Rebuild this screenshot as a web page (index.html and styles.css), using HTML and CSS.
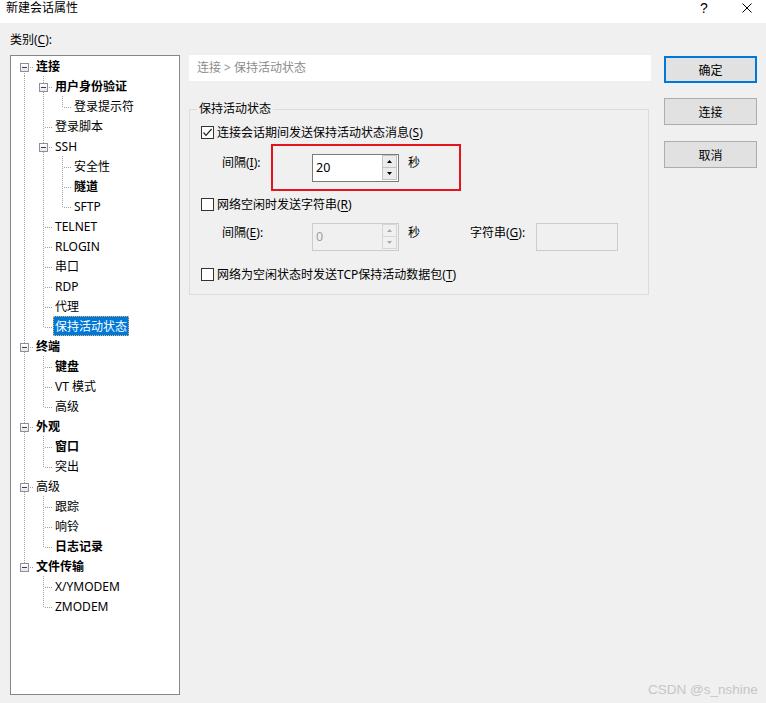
FILE: index.html
```html
<!DOCTYPE html>
<html lang="zh">
<head>
<meta charset="utf-8">
<title>新建会话属性</title>
<link rel="stylesheet" href="styles.css">
</head>
<body>
<div class="window">
  <div class="titlebar">
    <span class="title">新建会话属性</span>
    <span class="tb-spacer"></span>
    <span class="help">?</span>
    <span class="close"><svg width="10" height="10" viewBox="0 0 10 10"><path d="M0.5 0.5L9.5 9.5M9.5 0.5L0.5 9.5" stroke="#000" stroke-width="1" fill="none"/></svg></span>
  </div>

  <div class="main">
    <div class="left">
      <div class="cat">类别(<u>C</u>):</div>
      <div class="tree">
        <div class="row"><span class="c f"><span class="box"><span class="minus"></span></span></span><span class="lbl b">连接</span></div>
        <div class="row"><span class="c v"></span><span class="c t"><span class="box"><span class="minus"></span></span></span><span class="lbl b">用户身份验证</span></div>
        <div class="row"><span class="c v"></span><span class="c v"></span><span class="c l"></span><span class="lbl">登录提示符</span></div>
        <div class="row"><span class="c v"></span><span class="c t"></span><span class="lbl">登录脚本</span></div>
        <div class="row"><span class="c v"></span><span class="c t"><span class="box"><span class="minus"></span></span></span><span class="lbl">SSH</span></div>
        <div class="row"><span class="c v"></span><span class="c v"></span><span class="c t"></span><span class="lbl">安全性</span></div>
        <div class="row"><span class="c v"></span><span class="c v"></span><span class="c t"></span><span class="lbl b">隧道</span></div>
        <div class="row"><span class="c v"></span><span class="c v"></span><span class="c l"></span><span class="lbl">SFTP</span></div>
        <div class="row"><span class="c v"></span><span class="c t"></span><span class="lbl">TELNET</span></div>
        <div class="row"><span class="c v"></span><span class="c t"></span><span class="lbl">RLOGIN</span></div>
        <div class="row"><span class="c v"></span><span class="c t"></span><span class="lbl">串口</span></div>
        <div class="row"><span class="c v"></span><span class="c t"></span><span class="lbl">RDP</span></div>
        <div class="row"><span class="c v"></span><span class="c t"></span><span class="lbl">代理</span></div>
        <div class="row"><span class="c v"></span><span class="c l"></span><span class="lbl sel">保持活动状态</span></div>
        <div class="row"><span class="c t"><span class="box"><span class="minus"></span></span></span><span class="lbl b">终端</span></div>
        <div class="row"><span class="c v"></span><span class="c t"></span><span class="lbl b">键盘</span></div>
        <div class="row"><span class="c v"></span><span class="c t"></span><span class="lbl">VT 模式</span></div>
        <div class="row"><span class="c v"></span><span class="c l"></span><span class="lbl">高级</span></div>
        <div class="row"><span class="c t"><span class="box"><span class="minus"></span></span></span><span class="lbl b">外观</span></div>
        <div class="row"><span class="c v"></span><span class="c t"></span><span class="lbl b">窗口</span></div>
        <div class="row"><span class="c v"></span><span class="c l"></span><span class="lbl">突出</span></div>
        <div class="row"><span class="c t"><span class="box"><span class="minus"></span></span></span><span class="lbl">高级</span></div>
        <div class="row"><span class="c v"></span><span class="c t"></span><span class="lbl">跟踪</span></div>
        <div class="row"><span class="c v"></span><span class="c t"></span><span class="lbl">响铃</span></div>
        <div class="row"><span class="c v"></span><span class="c l"></span><span class="lbl b">日志记录</span></div>
        <div class="row"><span class="c l"><span class="box"><span class="minus"></span></span></span><span class="lbl b">文件传输</span></div>
        <div class="row"><span class="c e"></span><span class="c t"></span><span class="lbl">X/YMODEM</span></div>
        <div class="row"><span class="c e"></span><span class="c l"></span><span class="lbl">ZMODEM</span></div>
      </div>
    </div>

    <div class="middle">
      <div class="crumb">连接 &gt; 保持活动状态</div>
      <fieldset class="group">
        <legend>保持活动状态</legend>
        <div class="gbody">
          <div class="chk-row">
            <span class="cb"><svg width="11" height="11" viewBox="0 0 11 11"><path d="M1.5 5.5L4 8.3L9.6 2" stroke="#222" stroke-width="1.2" fill="none"/></svg></span>
            <span>连接会话期间发送保持活动状态消息(<u>S</u>)</span>
          </div>
          <div class="int-row r1">
            <span class="ilbl">间隔(<u>I</u>):</span>
            <div class="spin">
              <span class="spin-val">20</span>
              <span class="spin-btns">
                <span class="sb"><svg width="5" height="3" viewBox="0 0 5 3"><path d="M0 3L2.5 0L5 3Z" fill="#000"/></svg></span>
                <span class="sb"><svg width="5" height="3" viewBox="0 0 5 3"><path d="M0 0L5 0L2.5 3Z" fill="#000"/></svg></span>
              </span>
            </div>
            <span class="unit">秒</span>
          </div>
          <div class="chk-row r2">
            <span class="cb"></span>
            <span>网络空闲时发送字符串(<u>R</u>)</span>
          </div>
          <div class="int-row r2b">
            <span class="ilbl">间隔(<u>E</u>):</span>
            <div class="spin dis">
              <span class="spin-val">0</span>
              <span class="spin-btns">
                <span class="sb"><svg width="5" height="3" viewBox="0 0 5 3"><path d="M0 3L2.5 0L5 3Z" fill="#a8a8a8"/></svg></span>
                <span class="sb"><svg width="5" height="3" viewBox="0 0 5 3"><path d="M0 0L5 0L2.5 3Z" fill="#a8a8a8"/></svg></span>
              </span>
            </div>
            <span class="unit">秒</span>
            <span class="slbl">字符串(<u>G</u>):</span>
            <span class="tbox"></span>
          </div>
          <div class="chk-row r3">
            <span class="cb"></span>
            <span>网络为空闲状态时发送TCP保持活动数据包(<u>T</u>)</span>
          </div>
        </div>
      </fieldset>
    </div>

    <div class="btns">
      <div class="btn def">确定</div>
      <div class="btn b2">连接</div>
      <div class="btn b3">取消</div>
    </div>
  </div>

  <div class="redbox"></div>
  <div class="watermark">CSDN @s_nshine</div>
</div>
</body>
</html>
```

FILE: styles.css
```css
* { box-sizing: border-box; }
html, body { margin: 0; padding: 0; }
body {
  width: 766px;
  height: 703px;
  overflow: hidden;
  background: #f0f0f0;
  font-family: "Noto Sans", "Noto Sans CJK SC", sans-serif;
  font-size: 12px;
  color: #000;
}
u { text-decoration: underline; text-underline-offset: 2px; }

.window { position: relative; width: 766px; height: 703px; }

/* title bar */
.titlebar { height: 23px; background: #fff; display: flex; align-items: flex-start; }
.title { padding-left: 6px; line-height: 16px; }
.tb-spacer { flex: 1; }
.help {
  width: 10px;
  margin-right: 32px;
  font-family: "Liberation Sans", sans-serif;
  font-size: 14px;
  line-height: 16px;
  white-space: nowrap;
}
.close { width: 10px; height: 10px; margin-top: 3px; margin-right: 14px; display: flex; }

/* layout */
.main { display: flex; padding: 9px 0 0 10px; }
.left { width: 170px; flex: none; }
.cat { height: 16px; line-height: 16px; }
.tree {
  margin-top: 7px;
  height: 640px;
  border: 1px solid #828790;
  background: #fff;
}

/* tree rows */
.row { display: flex; height: 20px; padding-left: 4px; }
.c { width: 19px; height: 20px; flex: none; display: flex; align-items: flex-start; }
.c.v {
  background: repeating-linear-gradient(to bottom, #a0a0a0 0 1px, transparent 1px 2px) 9px 0 / 1px 20px no-repeat;
}
.c.t {
  background:
    repeating-linear-gradient(to bottom, #a0a0a0 0 1px, transparent 1px 2px) 9px 0 / 1px 20px no-repeat,
    repeating-linear-gradient(to right, #a0a0a0 0 1px, transparent 1px 2px) 11px 11px / 8px 1px no-repeat;
}
.c.l {
  background:
    repeating-linear-gradient(to bottom, #a0a0a0 0 1px, transparent 1px 2px) 9px 0 / 1px 11px no-repeat,
    repeating-linear-gradient(to right, #a0a0a0 0 1px, transparent 1px 2px) 11px 11px / 8px 1px no-repeat;
}
.c.f {
  background:
    repeating-linear-gradient(to bottom, #a0a0a0 0 1px, transparent 1px 2px) 9px 11px / 1px 9px no-repeat,
    repeating-linear-gradient(to right, #a0a0a0 0 1px, transparent 1px 2px) 11px 11px / 8px 1px no-repeat;
}
.box {
  width: 9px;
  height: 9px;
  margin: 7px 0 0 5px;
  border: 1px solid #919191;
  background: linear-gradient(#ffffff, #e6e6e6);
  display: flex;
  align-items: center;
  justify-content: center;
}
.minus { width: 5px; height: 1px; background: #2c3d73; }
.lbl { padding: 1px 2px 0; line-height: 19px; height: 20px; white-space: nowrap; }
.lbl.b { font-weight: bold; }
.lbl.sel {
  background: #0078d7;
  color: #fff;
  outline: 1px dotted #f5b060;
  outline-offset: -1px;
}

/* middle */
.middle { width: 462px; flex: none; margin-left: 9px; padding-top: 23px; }
.crumb {
  height: 26px;
  line-height: 26px;
  background: #fff;
  padding-left: 8px;
  color: #8c8c8c;
}
fieldset.group {
  margin: 20px 2px 0 0;
  padding: 0 0 12px 0;
  border: 1px solid #dcdcdc;
  min-width: 0;
}
fieldset.group legend {
  margin-left: 7px;
  padding: 0 2px;
  line-height: 16px;
}
.gbody { padding: 7px 0 0 11px; }
.chk-row { display: flex; align-items: center; height: 16px; white-space: nowrap; }
.chk-row.r2 { margin-top: 14px; }
.chk-row.r3 { margin-top: 15px; }
.cb {
  width: 13px;
  height: 13px;
  flex: none;
  border: 1px solid #333;
  background: #fff;
  margin-right: 3px;
  display: flex;
}
.int-row { display: flex; align-items: flex-start; margin-left: 21px; }
.int-row.r1 { margin-top: 14px; }
.int-row.r2b { margin-top: 11px; }
.ilbl { width: 90px; flex: none; line-height: 16px; margin-top: 1px; }
.int-row.r2b .ilbl { margin-top: 2px; }
.spin {
  width: 87px;
  height: 28px;
  flex: none;
  display: flex;
  border: 1px solid #7a7a7a;
  background: #fff;
}
.spin-val { flex: 1; padding-left: 3px; line-height: 26px; font-size: 12.5px; }
.spin-btns { width: 16px; display: flex; flex-direction: column; padding: 0 1px 1px 0; }
.sb {
  flex: 1;
  display: flex;
  align-items: center;
  justify-content: center;
  background: #ececec;
  border: 1px solid #c4c4c4;
}
.sb + .sb { border-top: none; }
.spin.dis { border-color: #cccccc; background: #f0f0f0; }
.spin.dis .spin-val { color: #a0a0a0; }
.spin.dis .sb { background: #f0f0f0; border-color: #d6d6d6; }
.unit { width: 62px; flex: none; margin-left: 9px; line-height: 16px; margin-top: 1px; }
.int-row.r2b .unit { margin-top: 2px; }
.slbl { width: 66px; flex: none; line-height: 16px; margin-top: 2px; white-space: nowrap; }
.tbox {
  width: 82px;
  height: 28px;
  flex: none;
  border: 1px solid #cccccc;
  background: #f0f0f0;
}

/* buttons */
.btns { width: 93px; flex: none; margin-left: 13px; padding-top: 24px; display: flex; flex-direction: column; }
.btn {
  height: 27px;
  background: #e1e1e1;
  border: 1px solid #adadad;
  display: flex;
  align-items: center;
  justify-content: center;
}
.btn.def { border: 2px solid #0078d7; }
.btn.b2 { margin-top: 15px; }
.btn.b3 { margin-top: 16px; }

/* overlays */
.redbox {
  position: absolute;
  left: 271px;
  top: 144px;
  width: 190px;
  height: 47px;
  border: 2px solid #e3141c;
}
.watermark {
  position: absolute;
  left: 648px;
  top: 682px;
  font-family: "Liberation Sans", sans-serif;
  font-size: 13.5px;
  line-height: 16px;
  color: #c6c6c6;
  white-space: nowrap;
}
```
